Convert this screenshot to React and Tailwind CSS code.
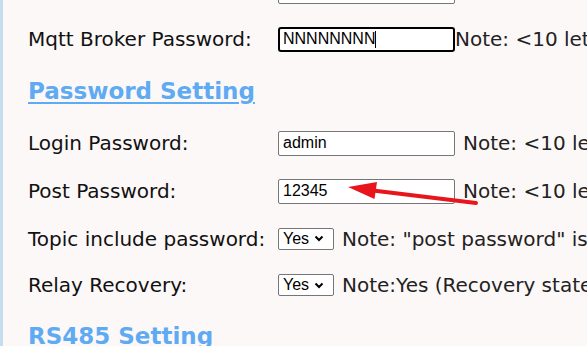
import React from 'react';

const sans = { fontFamily: '"DejaVu Sans", Verdana, sans-serif' };

function TextBox({ value, focused }) {
  if (focused) {
    return (
      <div className="shrink-0 w-[177px] h-[25px] border-2 border-black rounded-[3px] bg-white flex items-center px-[3px] text-[16px] text-black font-['Liberation_Sans',Arial,sans-serif]">
        <span>{value}</span>
        <span className="w-px h-[17px] bg-black" />
      </div>
    );
  }
  return (
    <input
      readOnly
      value={value}
      className="shrink-0 w-[177px] h-[25px] border border-[#767676] rounded-[2px] bg-white px-[4px] text-[16px] text-black outline-none font-['Liberation_Sans',Arial,sans-serif]"
    />
  );
}

function YesSelect() {
  return (
    <div className="shrink-0 w-[56px] h-[22px] border border-[#767676] rounded-[2px] bg-white flex items-center pl-[4px] gap-[5px] text-[16px] text-black font-['Liberation_Sans',Arial,sans-serif]">
      <span>Yes</span>
      <svg width="10" height="7" viewBox="0 0 10 7">
        <path d="M1.5 1.5 L5 5 L8.5 1.5" fill="none" stroke="#000" strokeWidth="2" />
      </svg>
    </div>
  );
}

function Row({ label, children, className = 'h-[48px]' }) {
  return (
    <div className={`flex items-center whitespace-nowrap ${className}`}>
      <div className="w-[250px] shrink-0 text-[20px] text-[#111]">{label}</div>
      {children}
    </div>
  );
}

function Heading({ children }) {
  return (
    <div className="h-[56px] flex items-center">
      <span className="text-[23px] font-bold text-[#5eabf3] underline underline-offset-[3px] decoration-2">{children}</span>
    </div>
  );
}

export default function App() {
  return (
    <div className="w-[587px] h-[346px] overflow-hidden bg-[#fdf8f8] border-l-[3px] border-[#c6ddf0]" style={sans}>
      <div className="pl-[25px] -mt-[33px]">
        <Row label="">
          <TextBox value="" />
        </Row>
        <Row label="Mqtt Broker Password:">
          <TextBox value="NNNNNNNN" focused />
          <span className="text-[20px] text-[#222]">Note: &lt;10 letters</span>
        </Row>

        <Heading>Password Setting</Heading>

        <Row label="Login Password:">
          <TextBox value="admin" />
          <span className="ml-[8px] text-[20px] text-[#222]">Note: &lt;10 letters</span>
        </Row>
        <div className="relative">
          <Row label="Post Password:">
            <TextBox value="12345" />
            <span className="ml-[8px] text-[20px] text-[#222]">Note: &lt;10 letters</span>
          </Row>
          <svg className="absolute left-[315px] top-[8px]" width="140" height="35" viewBox="0 0 140 35">
            <line x1="30" y1="15.5" x2="133" y2="28" stroke="#e8161c" strokeWidth="4" strokeLinecap="round" />
            <polygon points="5,12 34,7 31.5,24" fill="#e8161c" />
          </svg>
        </div>
        <Row label="Topic include password:" className="h-[47px]">
          <YesSelect />
          <span className="ml-[8px] text-[20px] text-[#222]">Note: "post password" is included in topic</span>
        </Row>
        <Row label="Relay Recovery:" className="h-[46px]">
          <YesSelect />
          <span className="ml-[8px] text-[20px] text-[#222]">Note:Yes (Recovery state after power on)</span>
        </Row>

        <Heading>RS485 Setting</Heading>
      </div>
    </div>
  );
}
